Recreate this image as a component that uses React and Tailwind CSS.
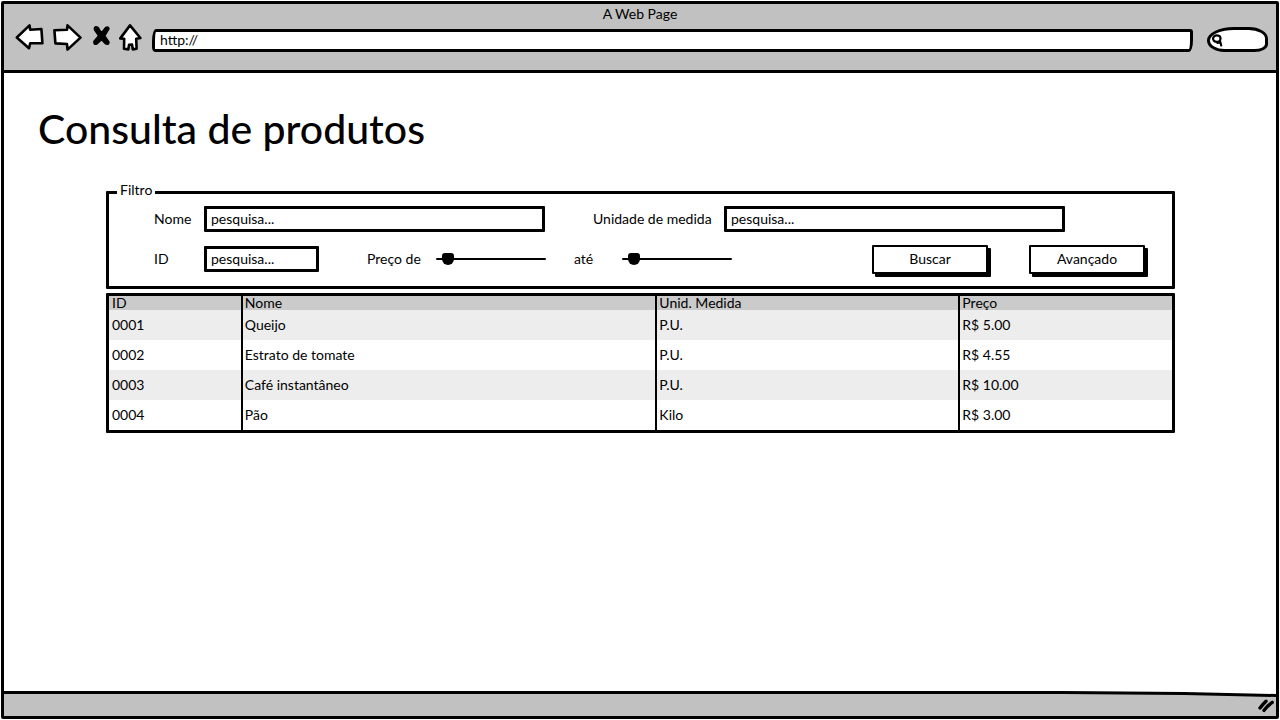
import React from 'react';

const products = [
  { id: '0001', name: 'Queijo', unit: 'P.U.', price: 'R$ 5.00' },
  { id: '0002', name: 'Estrato de tomate', unit: 'P.U.', price: 'R$ 4.55' },
  { id: '0003', name: 'Café instantâneo', unit: 'P.U.', price: 'R$ 10.00' },
  { id: '0004', name: 'Pão', unit: 'Kilo', price: 'R$ 3.00' },
];

function NavButton({ label, className, viewBox, children }) {
  return (
    <button type="button" aria-label={label} className="shrink-0">
      <svg
        className={className}
        viewBox={viewBox}
        fill="white"
        stroke="black"
        strokeWidth="2.6"
        strokeLinejoin="round"
        strokeLinecap="round"
        aria-hidden="true"
      >
        {children}
      </svg>
    </button>
  );
}

function BrowserHeader() {
  return (
    <header className="border-b-[3px] border-black bg-[#c1c1c1] pb-[18px]">
      <p className="text-center leading-5">A Web Page</p>
      <div className="flex items-end gap-[9px] pr-[8px] pl-[11px]">
        <NavButton label="Voltar" className="block h-7 w-[29px]" viewBox="0 0 29 28">
          <path d="M1.8 13.5 L14.5 1.4 L15.2 5.8 L26.4 5 L27.4 19.3 L15.2 19.2 L14 24.2 Z" />
        </NavButton>
        <NavButton label="Avançar" className="block h-7 w-[30px]" viewBox="0 0 30 28">
          <path d="M1.4 6.2 L14 5.8 L14.5 1.4 L27.5 13.6 L14.5 25.6 L14 20 L2.4 19.4 Z" />
        </NavButton>
        <NavButton label="Parar" className="block h-7 w-[18px]" viewBox="0 0 18 28">
          <path
            d="M3.4 2.8 Q6 2.4 7.4 5.6 L9.6 8.6 L13.4 3.6 Q16.8 2 17 5 L12.8 12 L17 18 Q17.2 21.2 13.4 19.8 L9.6 15.8 L5.2 19.8 Q1.4 21.6 1.8 17.4 L6.6 11.8 L2.6 6 Q1.8 3.6 3.4 2.8 Z"
            fill="black"
            strokeWidth="1.4"
          />
        </NavButton>
        <NavButton label="Início" className="block h-7 w-6" viewBox="0 0 24 28">
          <path d="M11 1.4 L21.4 14 L17.2 14.8 L17.6 24.8 L13.8 25.4 L13 20.6 L10 20.8 L9.4 25.4 L5 24.8 L5.2 14.8 L1.3 14.4 Z" />
        </NavButton>
        <input
          type="text"
          aria-label="Endereço"
          defaultValue="http://"
          className="h-[23px] min-w-0 flex-1 rounded-[4px_3px_4px_3px/12px_3px_12px_5px] border-[3px] border-black bg-white px-[5px] pb-[2px] outline-none"
        />
        <label className="ml-[5px] flex h-[25px] w-[61px] shrink-0 items-center rounded-[28px_20px_14px_18px/14px_12px_8px_12px] border-[3px] border-black bg-white pl-px">
          <svg
            className="h-[14px] w-[13px] shrink-0"
            viewBox="0 0 13 14"
            fill="none"
            stroke="black"
            strokeWidth="2.2"
            strokeLinecap="round"
            strokeLinejoin="round"
            aria-hidden="true"
          >
            <path d="M3 3.4 Q5.6 1.6 8.8 3.2 Q10.4 6 8.4 8.2 Q5.2 9.8 2.8 7.6 Q1.2 5.4 3 3.4 Z M6.4 9.8 L9.4 9.2 L10.2 12.4" />
          </svg>
          <input type="search" aria-label="Buscar na web" className="w-full min-w-0 bg-transparent outline-none" />
        </label>
      </div>
    </header>
  );
}

function SearchField({ id, className }) {
  return (
    <input
      id={id}
      type="text"
      placeholder="pesquisa..."
      className={`h-[26px] min-w-0 rounded-[1px] border-[3px] border-black bg-white px-1 pb-[2px] placeholder:text-black placeholder:opacity-100 outline-none ${className}`}
    />
  );
}

function PriceSlider({ id }) {
  return (
    <input
      id={id}
      type="range"
      min="0"
      max="100"
      defaultValue="6"
      className="h-4 w-[110px] shrink-0 appearance-none bg-transparent [&::-webkit-slider-runnable-track]:h-[2px] [&::-webkit-slider-runnable-track]:rounded-full [&::-webkit-slider-runnable-track]:bg-black [&::-webkit-slider-thumb]:-mt-[5px] [&::-webkit-slider-thumb]:h-3 [&::-webkit-slider-thumb]:w-3 [&::-webkit-slider-thumb]:appearance-none [&::-webkit-slider-thumb]:rounded-[3px_3px_6px_6px] [&::-webkit-slider-thumb]:bg-black"
    />
  );
}

function ActionButton({ children }) {
  return (
    <button
      type="button"
      className="h-[29px] w-[116px] shrink-0 rounded-[1px] border-2 border-black bg-white shadow-[3px_3px_0_0_#000]"
    >
      {children}
    </button>
  );
}

function Filter() {
  return (
    <fieldset className="rounded-[1px] border-[3px] border-black px-2 pb-[14px]">
      <legend className="bg-white px-[3px] pb-1 leading-5">Filtro</legend>
      <form className="flex flex-col gap-[14px] pt-[2px] pl-[37px]" onSubmit={(e) => e.preventDefault()}>
        <div className="flex items-center pr-[99px]">
          <label htmlFor="nome" className="w-[50px] shrink-0">Nome</label>
          <SearchField id="nome" className="flex-1" />
          <label htmlFor="unidade" className="ml-12 w-[131px] shrink-0">Unidade de medida</label>
          <SearchField id="unidade" className="flex-1" />
        </div>
        <div className="flex h-[26px] items-center pr-[19px]">
          <label htmlFor="codigo" className="w-[50px] shrink-0">ID</label>
          <SearchField id="codigo" className="w-[115px] shrink-0" />
          <label htmlFor="preco-min" className="ml-12 w-[69px] shrink-0">Preço de</label>
          <PriceSlider id="preco-min" />
          <label htmlFor="preco-max" className="ml-7 w-12 shrink-0">até</label>
          <PriceSlider id="preco-max" />
          <div className="ml-auto flex gap-[41px]">
            <ActionButton>Buscar</ActionButton>
            <ActionButton>Avançado</ActionButton>
          </div>
        </div>
      </form>
    </fieldset>
  );
}

function ProductTable() {
  return (
    <table className="mt-1 w-full table-fixed border-separate border-spacing-0 rounded-[1px] border-[3px] border-black text-left">
      <colgroup>
        <col className="w-[12.4%]" />
        <col className="w-[39%]" />
        <col className="w-[28.5%]" />
        <col />
      </colgroup>
      <thead className="bg-[#cbcbcb]">
        <tr className="h-[14px]">
          {['ID', 'Nome', 'Unid. Medida', 'Preço'].map((title) => (
            <th
              key={title}
              scope="col"
              className="border-l-2 border-black p-0 pl-[2px] leading-[14px] font-normal first:border-l-0 first:pl-[3px]"
            >
              {title}
            </th>
          ))}
        </tr>
      </thead>
      <tbody>
        {products.map((p) => (
          <tr key={p.id} className="h-[30px] odd:bg-[#ededed]">
            {[p.id, p.name, p.unit, p.price].map((value, i) => (
              <td key={i} className="border-l-2 border-black p-0 pl-[2px] first:border-l-0 first:pl-[3px]">
                {value}
              </td>
            ))}
          </tr>
        ))}
      </tbody>
    </table>
  );
}

export default function App() {
  return (
    <div className="flex min-h-screen bg-white p-px font-['Lato','Liberation_Sans',sans-serif] text-[14px] leading-5 text-black">
      <div className="flex min-w-0 flex-1 flex-col rounded-[2px] border-[3px] border-black">
        <BrowserHeader />
        <main className="flex-1 pt-8">
          <h1 className="pl-[34px] text-[41px] leading-[48px] font-medium">Consulta de produtos</h1>
          <div className="mr-[101px] ml-[102px] mt-[27px]">
            <Filter />
            <ProductTable />
          </div>
        </main>
        <footer className="flex h-[25px] flex-col bg-[#c1c1c1]">
          <svg className="h-[6px] w-full shrink-0" viewBox="0 0 1272 6" preserveAspectRatio="none" aria-hidden="true">
            <path d="M0 0 H1272 V4 L1180 2 L1060 1 H0 Z" fill="white" />
            <path d="M0 1.5 H1060 L1180 2.5 L1272 4.5" fill="none" stroke="black" strokeWidth="3" />
          </svg>
          <svg
            className="mr-px h-4 w-[18px] shrink-0 self-end"
            viewBox="0 0 18 16"
            fill="none"
            stroke="black"
            strokeWidth="3.4"
            strokeLinecap="round"
            aria-hidden="true"
          >
            <path d="M3 11 Q6 7 9 4.2 M7 13.4 Q10 9 15.2 5.4" />
          </svg>
        </footer>
      </div>
    </div>
  );
}
